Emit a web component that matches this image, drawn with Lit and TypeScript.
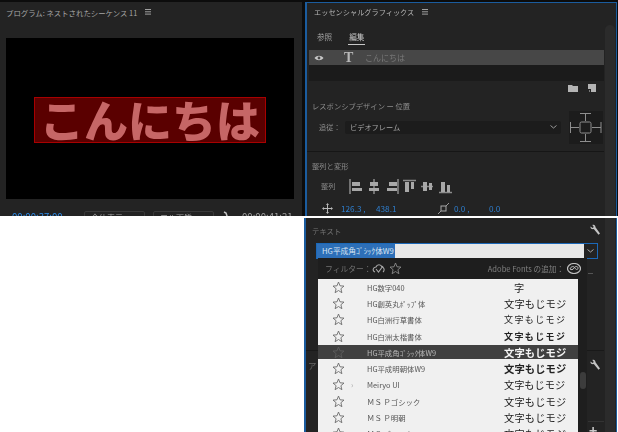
import { LitElement, html, css, svg } from "lit";
import { customElement } from "lit/decorators.js";

const star = (c = "#6c6c6c") => html`<svg width="13" height="13" viewBox="0 0 13 13"><path d="M6.5 1 8 4.8l4 .3-3.100 2.600 1 4L6.500 9.500 3.100 11.700l1-4L1 5.100l4-.3z" fill="none" stroke=${c} stroke-width=".9"/></svg>`;
const burger = html`<svg class="burger" width="7" height="6" viewBox="0 0 7 6"><path d="M0 .5h6M0 2.800h6M0 5.100h6" stroke="#a0a0a0" stroke-width="1"/></svg>`;
const wrench = html`<svg width="12" height="13" viewBox="0 0 12 13"><path d="M1.500 2.500 3.500 4l1.300-1L3.300 1c1.700-.8 3.200.2 3.200 2.200l4.500 6.300-1.500 1.300-4.700-5.700C2.500 5.400 1.100 4.200 1.500 2.500z" fill="#c4c4c4"/></svg>`;
const aligns = [
  svg`<path d="M1 0v15" stroke="#8c8c8c" stroke-width="1.500"/><path d="M3 3h8v4H3zM3 9h10v3H3z" fill="#a8a8a8"/>`,
  svg`<path d="M7 0v15" stroke="#8c8c8c" stroke-width="1.500"/><path d="M3 3h8v4H3zM2 9h10v3H2z" fill="#a8a8a8"/>`,
  svg`<path d="M13 0v15" stroke="#8c8c8c" stroke-width="1.500"/><path d="M4 3h8v4H4zM2 9h10v3H2z" fill="#a8a8a8"/>`,
  svg`<path d="M0 1.500h13" stroke="#8c8c8c" stroke-width="1.500"/><path d="M2 3h4v10H2zM8 3h3v7H8z" fill="#a8a8a8"/>`,
  svg`<path d="M0 7.500h12" stroke="#8c8c8c" stroke-width="1.500"/><path d="M2 3h4v9H2zM8 4h3v7H8z" fill="#a8a8a8"/>`,
  svg`<path d="M0 13.500h13" stroke="#8c8c8c" stroke-width="1.500"/><path d="M2 3h4v10H2zM8 6h3v7H8z" fill="#a8a8a8"/>`,
];
const fonts = [
  { n: "HG数字040", s: "字", c: "one" },
  { n: "HG創英丸ﾎﾟｯﾌﾟ体", s: "文字もじモジ", c: "wide" },
  { n: "HG白洲行草書体", s: "文字もじモジ", c: "spaced" },
  { n: "HG白洲太楷書体", s: "文字もじモジ", c: "spaced heavy" },
  { n: "HG平成角ｺﾞｼｯｸ体W9", s: "文字もじモジ", c: "heavy wide", sel: true },
  { n: "HG平成明朝体W9", s: "文字もじモジ", c: "heavy wide" },
  { n: "Meiryo UI", s: "文字もじモジ", c: "light", arrow: true },
  { n: "ＭＳ Ｐゴシック", s: "文字もじモジ", c: "light pw" },
  { n: "ＭＳ Ｐ明朝", s: "文字もじモジ", c: "light pw" },
  { n: "ＭＳ ゴシック", s: "文字もじモジ", c: "light pw" },
];

@customElement("app-root")
export class AppRoot extends LitElement {
  static styles = css`
    :host { display: block; width: 618px; height: 432px; overflow: hidden; background: #fff;
      font-family: "Noto Sans CJK JP", "Liberation Sans", sans-serif; font-size: 8px; color: #a0a0a0; }
    svg { display: block; flex: none; }
    .top { display: flex; height: 216px; background: #0c0c0c; padding-top: 2px; box-sizing: border-box; overflow: hidden; }
    .monitor { flex: none; width: 302px; background: #232323; display: flex; flex-direction: column; padding: 0 8px 0 6px; box-sizing: border-box; margin-right: 3px; filter: blur(.3px); }
    .monitor > * { flex: none; }
    .title { display: flex; align-items: center; height: 20px; font-size: 7.400px; color: #a6a6a6; gap: 8px; white-space: nowrap; }
    .screen { margin-top: 16px; height: 161px; background: #000; display: flex; align-items: center; justify-content: center; }
    .tbox { width: 232px; height: 46px; box-sizing: border-box; background: #5a0000; border: 1px solid #a80000; margin-top: 3px;
      color: #c66666; font-size: 44px; font-weight: 900; line-height: 42px; text-align: center; white-space: nowrap; }
    .transport { display: flex; align-items: flex-start; margin-top: 12px; padding-left: 6px; font-size: 9.600px; line-height: 10px; white-space: nowrap; }
    .tc { color: #2d8ceb; width: 72px; }
    .drop { width: 61px; height: 12px; border: 1px solid #3a3a3a; border-radius: 2px; box-sizing: border-box; padding-left: 6px; margin-right: 8px; font-size: 8px; line-height: 11px; }
    .end { margin-left: 11px; }
    .panel { flex: 1; min-width: 0; display: flex; border: solid #1b5c9e; border-width: 1px 1px 0 2px; margin-right: 1px; background: #232323; }
    .col { flex: 1; min-width: 0; display: flex; flex-direction: column; filter: blur(.3px); }
    .col > * { flex: none; }
    .strip { flex: none; width: 10px; background: #2b2b2b; margin: 22px 1px 0 1px; border-radius: 5px 5px 0 0; }
    .head { height: 18px; display: flex; align-items: center; gap: 8px; padding-left: 7px; font-size: 7.200px; color: #b4b4b4; white-space: nowrap; }
    .tabs { display: flex; gap: 17px; padding: 10px 0 0 10px; height: 23px; box-sizing: border-box; font-size: 7.600px; }
    .tab { height: 13px; line-height: 11px; }
    .tab.on { color: #c8c8c8; border-bottom: 1px solid #c8c8c8; padding: 0 1px; margin-left: -1px; }
    .layer { height: 15px; margin: 6px 0 0 2px; background: #474747; display: flex; align-items: center; padding-left: 5px; color: #787878; font-size: 8px; }
    .t { font: 700 14px "Liberation Serif", serif; color: #b8b8b8; margin: 0 9px 0 20px; width: 12px; }
    .empty { height: 16px; margin-left: 2px; background: #1b1b1b; }
    .tools { display: flex; justify-content: flex-end; gap: 9px; padding-right: 8px; height: 14px; align-items: center; box-sizing: border-box; }
    .sect { padding-left: 5px; font-size: 7.300px; color: #8c8c8c; line-height: 12px; white-space: nowrap; }
    .follow { display: flex; align-items: center; gap: 7px; padding-left: 12px; margin-top: -4px; height: 38px; }
    .lab { width: 19px; font-size: 7.200px; color: #8c8c8c; white-space: nowrap; }
    .select { width: 216px; height: 13px; background: #1c1c1c; border-radius: 2px; display: flex; align-items: center; justify-content: space-between; padding: 0 4px 0 5px; box-sizing: border-box; color: #a8a8a8; font-size: 7.200px; }
    .pin { margin-left: 1px; background: #1c1c1c; }
    .rule { height: 1px; background: #161616; margin-top: 5px; }
    .alignrow { display: flex; align-items: center; gap: 4px; padding-left: 14px; height: 24px; margin-top: 2px; }
    .alignrow .lab { width: 20px; margin-right: 4px; }
    .xform { display: flex; align-items: center; padding-left: 15px; height: 12px; margin-top: 4px; color: #2e7fd0; font-size: 8.200px; white-space: nowrap; }
    .w35 { width: 35px; } .w62 { width: 62px; }
    .mv { margin-right: 8px; } .sc { margin-right: 5px; }
    .gap { height: 2px; background: #fff; }
    .bottom { height: 214px; display: flex; }
    .blank { flex: none; width: 304px; background: #fff; }
    .panel2 { flex: 1; min-width: 0; border: solid #1b5c9e; border-width: 0 1px 0 2px; margin-right: 1px; background: #232323; display: flex; position: relative; overflow: hidden; }
    .panel2 .strip { margin-top: 0; border-radius: 0; }
    .titlebar { height: 25px; display: flex; align-items: center; justify-content: space-between; padding: 0 3px 0 6px; color: #757575; font-size: 7.400px; }
    .input { height: 16px; margin: 0 6px 0 10px; border: 1px solid #1b68b8; display: flex; box-sizing: border-box; }
    .field { flex: 1; background: #e8e8e8; display: flex; align-items: center; }
    .selected { background: #2d6fb8; color: #dbe6f2; font-size: 7.700px; line-height: 14px; white-space: nowrap; padding: 0 1px 0 5px; }
    .chev { width: 13px; background: #232323; display: flex; align-items: center; justify-content: center; }
    .dash { height: 1px; width: 5px; background: #555; margin: 14px 0 0 282px; }
    .rule2 { height: 1px; background: #191919; margin-top: 76px; }
    .sub { display: flex; justify-content: space-between; align-items: center; height: 28px; padding: 0 3px 0 2px; color: #666; font-size: 8.400px; }
    .rule3 { height: 1px; background: #333; margin: 42px 0 0 282px; }
    .plus { color: #c8c8c8; font-size: 14px; font-weight: 700; line-height: 16px; margin-left: 283px; }
    .menu { position: absolute; left: 12px; top: 40px; width: 269px; bottom: 0; background: #1e1e1e; display: flex; flex-direction: column; filter: blur(.25px); }
    .mhead { height: 21px; flex: none; display: flex; align-items: center; padding-left: 7px; font-size: 7.800px; color: #707070; white-space: nowrap; }
    .mhead .r { margin-left: auto; display: flex; align-items: center; gap: 3px; margin-right: 6px; color: #808080; font-size: 7.600px; }
    .mhead .f { width: 47px; }
    .flt { margin-right: 4px; }
    .mbody { flex: 1; display: flex; min-height: 0; }
    .list { width: 260px; background: #f0f0f0; display: grid; grid-auto-rows: 16.300px; overflow: hidden; }
    .mscroll { flex: 1; position: relative; }
    .thumb { position: absolute; left: 2px; right: 1px; top: 93px; height: 17px; border-radius: 3px; background: #3c3c3c; }
    .row { display: flex; align-items: center; color: #555; font-size: 7.400px; white-space: nowrap; position: relative; }
    .row .st { width: 49px; padding-left: 14px; box-sizing: border-box; flex: none; }
    .row .nm { width: 137px; flex: none; }
    .row .ar { position: absolute; left: 33px; color: #aaa; font-size: 8px; }
    .row .sm { font-size: 10.200px; color: #222; }
    .row.sel { background: #404040; color: #b8b8b8; margin: 1px 0; }
    .row.sel .sm { color: #f4f4f4; }
    .row .sm.heavy { font-weight: 700; }
    .row .sm.wide { letter-spacing: .1px; font-size: 10.300px; }
    .row .sm.spaced { letter-spacing: 1.400px; font-size: 9px; }
    .row .sm.pw { letter-spacing: .2px; }
    .row .sm.one { padding-left: 10px; }
  `;

  render() {
    return html`
      <div class="top">
        <div class="monitor">
          <div class="title">プログラム: ネストされたシーケンス 11 ${burger}</div>
          <div class="screen"><div class="tbox">こんにちは</div></div>
          <div class="transport">
            <span class="tc">00:00:37:00</span>
            <span class="drop">全体表示</span>
            <span class="drop">フル画質</span>
            <svg width="9" height="8" viewBox="0 0 9 8"><path d="M2 1l2 1 2 6" stroke="#c4c4c4" stroke-width="1.500" fill="none"/></svg>
            <span class="end">00:00:41:21</span>
          </div>
        </div>
        <div class="panel">
          <div class="col">
            <div class="head">エッセンシャルグラフィックス ${burger}</div>
            <div class="tabs"><span class="tab">参照</span><span class="tab on">編集</span></div>
            <div class="layer">
              <svg width="10" height="6" viewBox="0 0 10 6"><path d="M.5 3C3 0 7 0 9.500 3 7 6 3 6 .5 3z" fill="#c8c8c8"/><circle cx="5" cy="3" r="1.400" fill="#474747"/></svg>
              <span class="t">T</span>こんにちは
            </div>
            <div class="empty"></div>
            <div class="tools">
              <svg width="11" height="8" viewBox="0 0 11 8"><path d="M0 1h4l1 1h5v6H0z" fill="#b4b4b4"/></svg>
              <svg width="8" height="8" viewBox="0 0 8 8"><path d="M0 0h8v8H3V5H0z" fill="#b4b4b4"/><path d="M1 6h1v2H1z" fill="#777"/></svg>
            </div>
            <div class="sect" style="margin-top:5px">レスポンシブデザイン ー 位置</div>
            <div class="follow">
              <span class="lab">追従：</span>
              <div class="select">ビデオフレーム
                <svg width="7" height="4" viewBox="0 0 7 4"><path d="M.5.500 3.500 3l3-2.500" stroke="#999" fill="none"/></svg>
              </div>
              <svg class="pin" width="34" height="33" viewBox="0 0 34 33" fill="none" stroke="#8e8e8e">
                <rect x="11" y="11" width="11" height="11" rx="1.500"/>
                <path d="M11 2.500h11M16.500 3v7M11 30.500h11M16.500 23v7M1.500 11v11M2 16.500h8M32 11v11M23 16.500h9"/>
              </svg>
            </div>
            <div class="rule"></div>
            <div class="sect" style="margin-top:8px">整列と変形</div>
            <div class="alignrow">
              <span class="lab">整列</span>
              ${aligns.map((a) => html`<svg width="14" height="15" viewBox="0 0 14 15">${a}</svg>`)}
            </div>
            <div class="xform">
              <svg class="mv" width="11" height="11" viewBox="0 0 11 11"><path d="M5.500 0 7 2H6v3h3V4l2 1.500L9 7V6H6v3h1l-1.500 2L4 9h1V6H2v1L0 5.500 2 4v1h3V2H4z" fill="#b8b8b8"/></svg>
              <span class="w35">126.3 ,</span><span class="w62">438.1</span>
              <svg class="sc" width="11" height="11" viewBox="0 0 11 11"><path d="M0 11l11-11" stroke="#999"/><rect x="3" y="3" width="5" height="5" fill="#232323" stroke="#aaa"/></svg>
              <span class="w35">0.0 ,</span><span>0.0</span>
            </div>
          </div>
          <div class="strip"></div>
        </div>
      </div>
      <div class="gap"></div>
      <div class="bottom">
        <div class="blank"></div>
        <div class="panel2">
          <div class="col">
            <div class="titlebar"><span>テキスト</span>${wrench}</div>
            <div class="input">
              <div class="field"><span class="selected">HG平成角ｺﾞｼｯｸ体W9</span></div>
              <div class="chev"><svg width="7" height="4" viewBox="0 0 7 4"><path d="M.5.500 3.500 3l3-2.500" stroke="#aaa" fill="none"/></svg></div>
            </div>
            <div class="dash"></div>
            <div class="rule2"></div>
            <div class="sub"><span>ア</span>${wrench}</div>
            <div class="rule3"></div>
            <div class="plus">+</div>
          </div>
          <div class="strip"></div>
          <div class="menu">
            <div class="mhead">
              <span class="f">フィルター：</span>
              <svg class="flt" width="13" height="12" viewBox="0 0 13 12"><path d="M3 9C0 8 1 4 4 4 5 1 9 1 10 4c2 .5 3 3 1 5M4 6l2.500 3L11 3" fill="none" stroke="#a8a8a8" stroke-width="1.100"/></svg>
              ${star("#8a8a8a")}
              <span class="r">Adobe Fonts の追加：
                <svg width="14" height="11" viewBox="0 0 14 11"><ellipse cx="7" cy="5.500" rx="6.500" ry="5" fill="none" stroke="#c0c0c0" stroke-width="1.200"/><path d="M3 6c1-3 4-3 5-1s3 2 3 0-3-2-4 0-3 2-4 1z" fill="none" stroke="#c0c0c0"/></svg>
              </span>
            </div>
            <div class="mbody">
              <div class="list">
                ${fonts.map((f) => html`
                  <div class="row ${f.sel ? "sel" : ""}">
                    <span class="st">${star(f.sel ? "#5c5c5c" : "#6c6c6c")}</span>
                    ${f.arrow ? html`<span class="ar">›</span>` : ""}
                    <span class="nm">${f.n}</span>
                    <span class="sm ${f.c}">${f.s}</span>
                  </div>`)}
              </div>
              <div class="mscroll"><div class="thumb"></div></div>
            </div>
          </div>
        </div>
      </div>
    `;
  }
}
